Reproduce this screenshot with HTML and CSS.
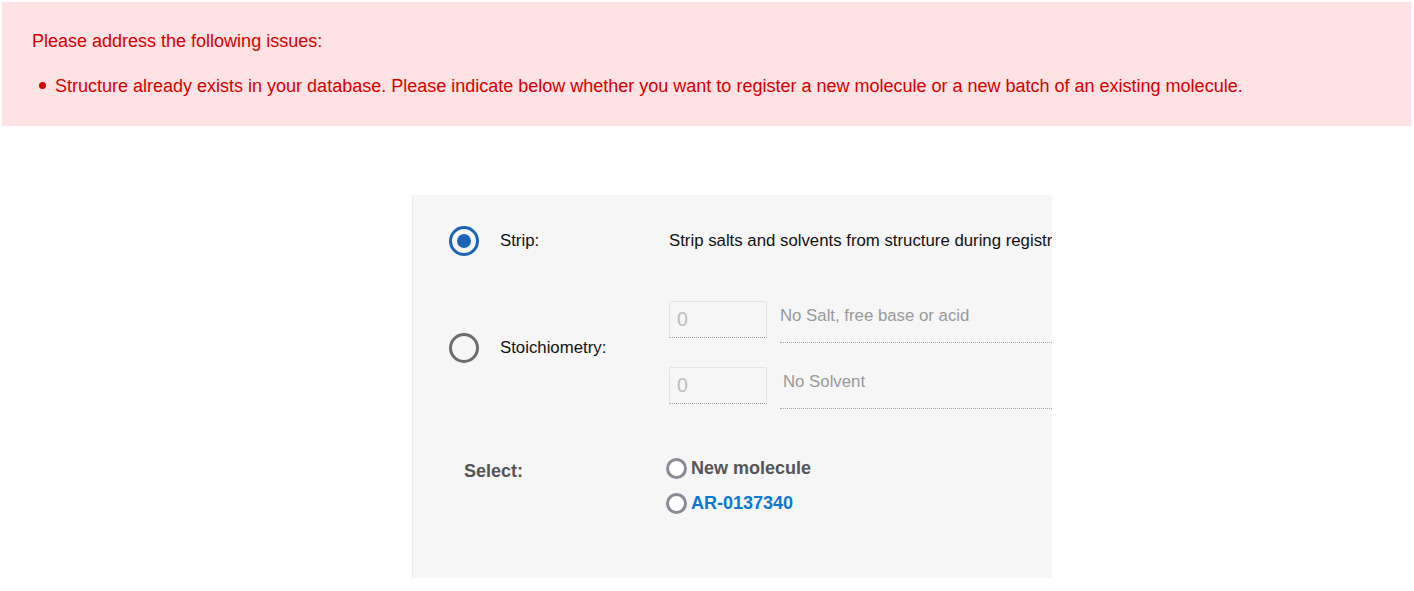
FILE: index.html
```html
<!DOCTYPE html>
<html>
<head>
<meta charset="utf-8">
<link rel="stylesheet" href="styles.css">
</head>
<body>
<div class="alert">
  <p class="alert-title">Please address the following issues:</p>
  <ul class="alert-list">
    <li>Structure already exists in your database. Please indicate below whether you want to register a new molecule or a new batch of an existing molecule.</li>
  </ul>
</div>

<div class="panel">
  <div class="row row-strip">
    <span class="radio-lg checked"></span>
    <span class="label">Strip:</span>
    <span class="content nowrap">Strip salts and solvents from structure during registration</span>
  </div>

  <div class="row row-stoich">
    <div class="stoich-left">
      <span class="radio-lg"></span>
      <span class="label">Stoichiometry:</span>
    </div>
    <div class="content stoich-items">
      <div class="stoich-item">
        <div class="num-box">0</div>
        <div class="desc">No Salt, free base or acid</div>
      </div>
      <div class="stoich-item">
        <div class="num-box">0</div>
        <div class="desc desc-shift">No Solvent</div>
      </div>
    </div>
  </div>

  <div class="row row-select">
    <span class="select-label">Select:</span>
    <div class="select-options">
      <div class="opt"><span class="radio-sm"></span><span class="opt-text">New molecule</span></div>
      <div class="opt"><span class="radio-sm"></span><span class="opt-text link">AR-0137340</span></div>
    </div>
  </div>
</div>
</body>
</html>
```

FILE: styles.css
```css
* { box-sizing: border-box; }
html, body { margin: 0; padding: 0; background: #fff; }
body {
  font-family: "Liberation Sans", Arial, sans-serif;
  padding: 2px 3px 0 2px;
}

.alert {
  background: #fee2e4;
  color: #d50000;
  height: 124px;
  padding: 29px 30px 0 30px;
  font-size: 18px;
}
.alert-title { margin: 0; line-height: 21px; }
.alert-list { list-style: none; margin: 24px 0 0 0; padding: 0 0 0 7px; line-height: 21px; }
.alert-list li::before {
  content: "";
  display: inline-block;
  width: 7px; height: 7px;
  border-radius: 50%;
  background: #d50000;
  margin-right: 9px;
  vertical-align: middle;
  position: relative; top: -2px;
}

.panel {
  margin: 69px 0 0 410px;
  width: 640px;
  height: 383px;
  background: #f6f6f6;
  border-left: 1px solid #ebebeb;
  overflow: hidden;
  padding-top: 31px;
  font-size: 16.8px;
  color: #111;
}

.row { display: flex; }
.row-strip { align-items: center; height: 30px; }

.radio-lg {
  flex: none;
  width: 30px; height: 30px;
  margin-left: 36px;
  border-radius: 50%;
  border: 3px solid #6d6d6d;
  background: #f6f6f6;
  position: relative;
}
.radio-lg.checked { border-color: #1b63b4; }
.radio-lg.checked::after {
  content: "";
  position: absolute;
  left: 5px; top: 5px;
  width: 14px; height: 14px;
  border-radius: 50%;
  background: #1b63b4;
}
.label { width: 190px; padding-left: 21px; flex: none; }
.nowrap { white-space: nowrap; }

.row-stoich { margin-top: 45px; }
.stoich-left { display: flex; align-items: center; height: 30px; margin-top: 32px; }
.content { flex: 1; min-width: 0; }
.stoich-items { display: flex; flex-direction: column; gap: 24px; }
.stoich-item { display: flex; height: 42px; }
.num-box {
  flex: none;
  width: 98px; height: 37px;
  border: 1px solid #e4e4e4;
  border-bottom: 1px dotted #9a9a9a;
  border-radius: 2px 2px 0 0;
  color: #bdbdbd;
  font-size: 19.5px;
  padding: 6px 0 0 7px;
  line-height: 22px;
}
.desc {
  flex: 1;
  margin-left: 13px;
  border-bottom: 1px dotted #a8a8a8;
  color: #999;
  padding-top: 5px;
  line-height: 20px;
  white-space: nowrap;
}
.desc-shift { padding-left: 3px; }

.row-select { margin-top: 49px; }
.select-label {
  flex: none;
  width: 202px;
  margin-left: 51px;
  padding-top: 3px;
  font-size: 18px;
  font-weight: bold;
  color: #555;
  line-height: 21px;
}
.select-options { display: flex; flex-direction: column; gap: 15px; }
.opt { display: flex; align-items: center; height: 20px; }
.radio-sm {
  flex: none;
  width: 21px; height: 21px;
  border-radius: 50%;
  border: 3px solid #8b8b96;
  background: #fff;
  margin-right: 4px;
}
.opt-text { font-weight: bold; color: #555; font-size: 18px; }
.opt-text.link { color: #0d78d0; }
```
